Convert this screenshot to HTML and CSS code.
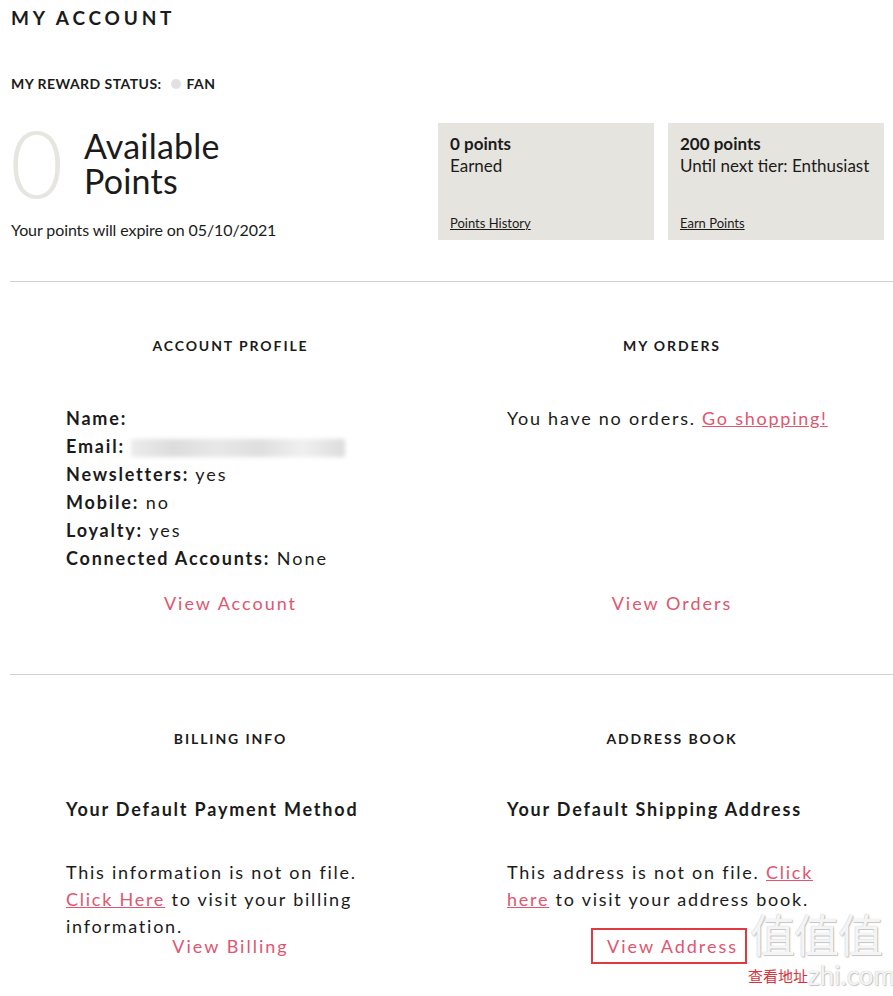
FILE: index.html
```html
<!DOCTYPE html>
<html lang="en">
<head>
<meta charset="utf-8">
<title>My Account</title>
<link rel="stylesheet" href="styles.css">
</head>
<body>
<div class="page">
  <h1 class="page-title">MY ACCOUNT</h1>

  <div class="reward-status">
    <span class="reward-label">MY REWARD STATUS:</span>
    <span class="tier-dot"></span>
    <span class="tier-name">FAN</span>
  </div>

  <div class="points-row">
    <div class="points-summary">
      <div class="points-big">
        <span class="points-num">0</span>
        <span class="points-caption">Available<br>Points</span>
      </div>
      <p class="points-expire">Your points will expire on 05/10/2021</p>
    </div>
    <div class="points-card">
      <div class="card-top">
        <strong>0 points</strong>
        <span>Earned</span>
      </div>
      <a class="card-link" href="#">Points History</a>
    </div>
    <div class="points-card">
      <div class="card-top">
        <strong>200 points</strong>
        <span>Until next tier: Enthusiast</span>
      </div>
      <a class="card-link" href="#">Earn Points</a>
    </div>
  </div>

  <div class="section-grid">
    <section class="panel">
      <h2 class="panel-title">ACCOUNT PROFILE</h2>
      <div class="panel-body profile">
        <div><b>Name:</b></div>
        <div class="email-row"><b>Email:</b> <span class="blur"></span></div>
        <div><b>Newsletters:</b> yes</div>
        <div><b>Mobile:</b> no</div>
        <div><b>Loyalty:</b> yes</div>
        <div><b>Connected Accounts:</b> None</div>
      </div>
      <a class="panel-link" href="#">View Account</a>
    </section>
    <section class="panel">
      <h2 class="panel-title">MY ORDERS</h2>
      <div class="panel-body">
        <p class="text">You have no orders. <a class="inline-link" href="#">Go shopping!</a></p>
      </div>
      <a class="panel-link" href="#">View Orders</a>
    </section>
  </div>

  <div class="section-grid second">
    <section class="panel">
      <h2 class="panel-title">BILLING INFO</h2>
      <div class="panel-body">
        <h3 class="sub-title">Your Default Payment Method</h3>
        <p class="text para">This information is not on file. <a class="inline-link" href="#">Click Here</a> to visit your billing information.</p>
      </div>
      <a class="panel-link tight" href="#">View Billing</a>
    </section>
    <section class="panel">
      <h2 class="panel-title">ADDRESS BOOK</h2>
      <div class="panel-body">
        <h3 class="sub-title">Your Default Shipping Address</h3>
        <p class="text para">This address is not on file. <a class="inline-link" href="#">Click here</a> to visit your address book.</p>
      </div>
      <div class="address-link-wrap">
        <a class="address-link" href="#">View Address</a>
        <span class="watermark">值值值</span>
        <span class="watermark-url">zhi.com</span>
        <span class="note">查看地址</span>
      </div>
    </section>
  </div>
</div>
</body>
</html>
```

FILE: styles.css
```css
* { box-sizing: border-box; }
html, body { margin: 0; padding: 0; background: #fff; }
body {
  font-family: Lato, "Noto Sans", sans-serif;
  color: #1b1b1b;
  overflow: hidden;
}
.page { padding: 7px 0 0 10px; width: 893px; min-height: 996px; }

.page-title {
  margin: 0 0 0 1px;
  font-size: 19px;
  line-height: 22px;
  font-weight: 700;
  letter-spacing: 3.8px;
}

.reward-status {
  margin-top: 47px;
  display: flex;
  align-items: center;
  font-size: 14px;
  font-weight: 700;
  line-height: 16px;
  letter-spacing: 0.45px;
}
.reward-label { margin-left: 1px; }
.tier-dot {
  width: 10px; height: 10px; border-radius: 50%;
  background: #e1e1e1;
  margin: 0 6px 0 9px;
}

.points-row {
  margin-top: 31px;
  display: grid;
  grid-template-columns: 1fr 216px 216px;
  column-gap: 14px;
  padding-right: 9px;
  height: 117px;
}
.points-big { display: flex; align-items: flex-start; }
.points-num {
  font-size: 92px;
  line-height: 80px;
  font-weight: 300;
  color: #e6e5e0;
  width: 74px;
}
.points-caption {
  font-size: 34px;
  line-height: 35px;
  font-weight: 400;
  margin-top: 5px;
  letter-spacing: 0.2px;
}
.points-expire {
  margin: 17px 0 0 1px;
  font-size: 16px;
  line-height: 20px;
  letter-spacing: -0.1px;
}
.points-card {
  background: #e6e4df;
  padding: 10px 12px 9px;
  display: flex;
  flex-direction: column;
  justify-content: space-between;
}
.card-top { display: flex; flex-direction: column; font-size: 17px; line-height: 22px; }
.card-top strong { font-weight: 700; }
.card-link {
  color: #1b1b1b;
  font-size: 13px;
  line-height: 16px;
  text-decoration: underline;
}

.section-grid {
  margin-top: 41px;
  border-top: 1px solid #d2d2d2;
  display: grid;
  grid-template-columns: 441px 442px;
  padding-top: 56px;
  padding-bottom: 58px;
}
.section-grid.second { margin-top: 0; padding-bottom: 0; align-items: start; }
.panel { display: flex; flex-direction: column; }
.panel-title {
  margin: 0;
  text-align: center;
  font-size: 14px;
  line-height: 16px;
  font-weight: 700;
  letter-spacing: 1.9px;
}
.panel-body { padding: 50px 56px 0; flex: 1; }
.second .panel-body { flex: none; }
.profile { font-size: 18px; line-height: 28px; letter-spacing: 2px; }
.profile b { font-weight: 700; letter-spacing: 1.8px; }
.email-row { display: flex; align-items: center; gap: 6px; }
.blur {
  display: inline-block;
  width: 214px; height: 18px;
  background: linear-gradient(90deg, #ececec, #dcdcdc 20%, #e8e8e8 40%, #dedede 60%, #f0f0f0 80%, #dcdcdc);
  filter: blur(2px);
  margin-top: 4px;
}
.text { margin: 0; font-size: 18px; line-height: 28px; letter-spacing: 1.75px; }
.inline-link { color: #e0566f; text-decoration: underline; }
.panel-link {
  align-self: center;
  margin-top: 18px;
  color: #e0566f;
  text-decoration: none;
  font-size: 18px;
  line-height: 26px;
  letter-spacing: 2px;
}
.sub-title {
  margin: 0;
  font-size: 18px;
  line-height: 24px;
  font-weight: 700;
  letter-spacing: 1.8px;
}
.para { margin-top: 38px; line-height: 27px; width: 316px; }
.panel-link.tight { margin-top: 0; line-height: 12px; }
.address-link-wrap {
  align-self: center;
  position: relative;
  margin-top: 15px;
  margin-left: -6px;
}
.address-link {
  display: block;
  border: 2px solid #e0393f;
  padding: 6px 9px 6px 14px;
  width: 156px;
  color: #e0566f;
  text-decoration: none;
  font-size: 18px;
  line-height: 20px;
  letter-spacing: 2px;
  white-space: nowrap;
}
.note {
  position: absolute;
  left: 157px;
  top: 38px;
  font-family: "Noto Sans CJK SC", sans-serif;
  color: #d6343a;
  font-size: 15px;
  line-height: 20px;
  white-space: nowrap;
}
.watermark {
  position: absolute;
  left: 159px;
  top: -20px;
  font-family: "Noto Sans CJK SC", sans-serif;
  font-size: 45px;
  line-height: 52px;
  letter-spacing: -1px;
  color: rgba(255,255,255,0.9);
  text-shadow: 0 0 1px #aaa, 1px 1px 1px #c8c8c8;
  white-space: nowrap;
}
.watermark-url {
  position: absolute;
  left: 217px;
  top: 32px;
  font-size: 26px;
  line-height: 30px;
  color: rgba(255,255,255,0.9);
  text-shadow: 0 0 1px #aaa, 1px 1px 1px #c8c8c8;
}
```
